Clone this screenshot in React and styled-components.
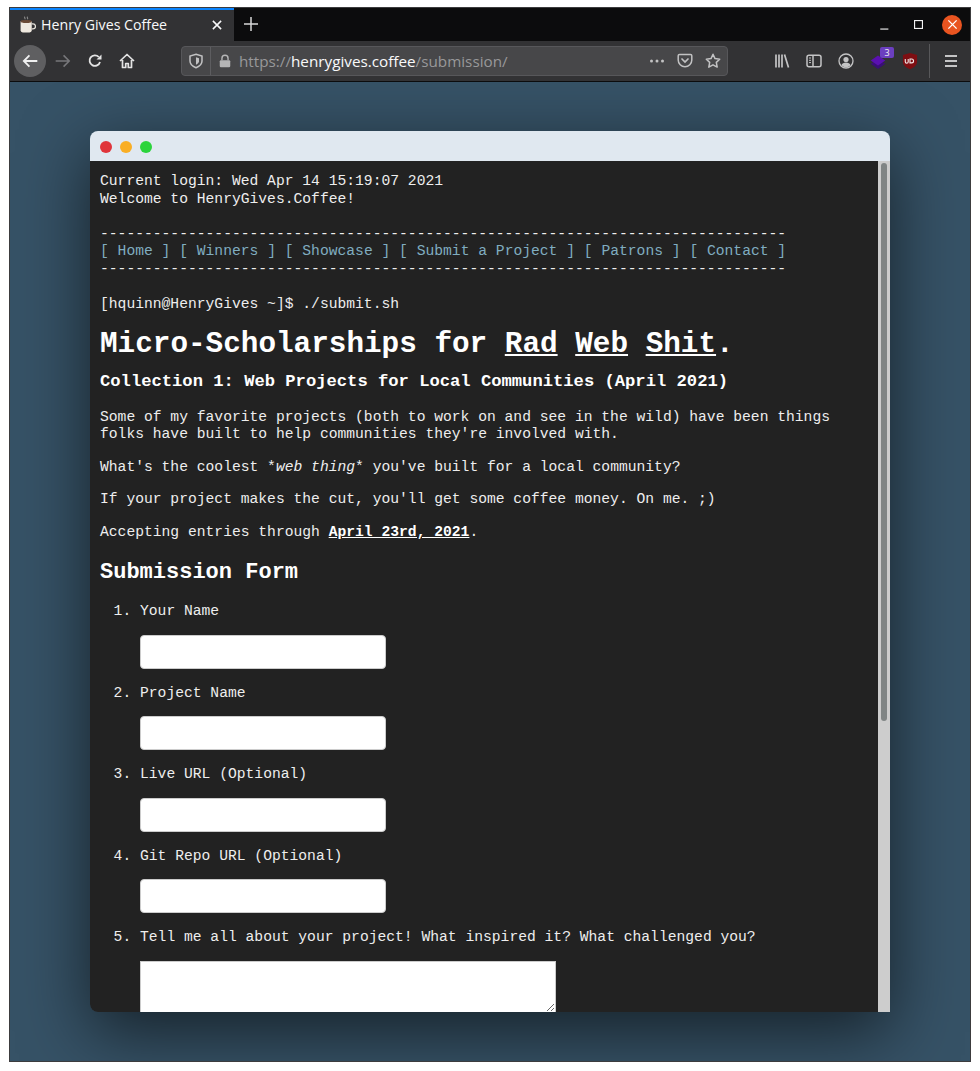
import React from "react";
import styled, { createGlobalStyle } from "styled-components";

const Global = createGlobalStyle`
  html, body {
    margin: 0;
    padding: 0;
    background: #fff;
  }
`;

const Screen = styled.div`
  width: 980px;
  height: 1071px;
  box-sizing: border-box;
  padding: 7px 9px 9px;
  overflow: hidden;
`;

const Frame = styled.div`
  height: 100%;
  box-sizing: border-box;
  border: 1px solid #3c3c3e;
  display: flex;
  flex-direction: column;
`;

const TabBar = styled.div`
  height: 33px;
  flex: none;
  background: #0c0c0d;
  display: flex;
  align-items: stretch;
`;

const Tab = styled.div`
  width: 224px;
  box-sizing: border-box;
  background: #323234;
  border-top: 2px solid #0a84ff;
  display: flex;
  align-items: center;
  padding: 0 11px 2px 9px;
  color: #f9f9fa;
  font: 14.2px "Open Sans", sans-serif;
`;

const TabTitle = styled.span`
  flex: 1;
  margin-left: 5px;
  white-space: nowrap;
`;

const NewTab = styled.div`
  width: 34px;
  padding-bottom: 2px;
  display: flex;
  align-items: center;
  justify-content: center;
`;

const WindowControls = styled.div`
  margin-left: auto;
  display: flex;
  align-items: center;
  padding-right: 8px;
  gap: 14px;
`;

const Control = styled.div`
  width: 20px;
  height: 20px;
  display: flex;
  align-items: center;
  justify-content: center;
`;

const CloseControl = styled(Control)`
  border-radius: 50%;
  background: #e95420;
`;

const Toolbar = styled.div`
  height: 40px;
  flex: none;
  box-sizing: border-box;
  background: #323234;
  display: flex;
  align-items: center;
  padding-left: 4px;
`;

const ToolButton = styled.div`
  width: 32px;
  height: 32px;
  flex: none;
  display: flex;
  align-items: center;
  justify-content: center;
  position: relative;
  border-radius: 50%;
  background: ${(p) => (p.$active ? "#5f5f61" : "transparent")};
  margin-right: ${(p) => (p.$active ? "1px" : "0")};
`;

const UrlBar = styled.div`
  width: 547px;
  height: 30px;
  box-sizing: border-box;
  margin-left: 38px;
  margin-right: 38px;
  background: #474749;
  border: 1px solid #57575a;
  border-radius: 4px;
  display: flex;
  align-items: center;
  padding: 0 0 0 6px;
  font: 15.25px "Open Sans", sans-serif;
  color: #98989a;
`;

const UrlDivider = styled.div`
  width: 1px;
  height: 28px;
  background: #5d5d60;
  margin: 0 7px 0 6px;
`;

const UrlText = styled.div`
  flex: 1;
  margin-left: 7px;
  white-space: nowrap;
`;

const Host = styled.span`
  color: #f9f9fa;
`;

const UrlAction = styled.div`
  width: 28px;
  display: flex;
  justify-content: center;
`;

const Badge = styled.span`
  position: absolute;
  top: 2px;
  right: 0;
  width: 14px;
  height: 11px;
  border-radius: 2px;
  background: #6b3fc0;
  color: #f2f2f2;
  font: 9px/11px "Open Sans", sans-serif;
  text-align: center;
`;

const ToolbarRule = styled.div`
  width: 1px;
  height: 34px;
  background: #58585a;
  margin: 0 5px 0 3px;
`;

const Page = styled.div`
  flex: 1;
  min-height: 0;
  overflow: hidden;
  border-top: 1px solid #0c0c0d;
  background: #365266;
  padding: 49px 80px 0;
`;

const TerminalWindow = styled.div`
  height: 881px;
  display: flex;
  flex-direction: column;
  border-radius: 8px 8px 0 8px;
  overflow: hidden;
  box-shadow: 0 20px 68px rgba(0, 0, 0, 0.6);
`;

const TitleBar = styled.div`
  height: 30px;
  flex: none;
  box-sizing: border-box;
  background: #e0e8f0;
  display: flex;
  align-items: center;
  padding: 2px 0 0 10px;
  gap: 8px;
`;

const Dot = styled.span`
  width: 12px;
  height: 12px;
  border-radius: 50%;
  background: ${(p) => p.$color};
`;

const TerminalBody = styled.div`
  flex: 1;
  min-height: 0;
  display: flex;
`;

const Content = styled.div`
  flex: 1;
  min-width: 0;
  overflow: hidden;
  box-sizing: border-box;
  padding: 12px 10px 10px;
  background: #222;
  color: #eee;
  font: 14.67px/17.5px "Liberation Mono", monospace;
`;

const Scrollbar = styled.div`
  width: 12px;
  flex: none;
  box-sizing: border-box;
  padding: 2px 3px 0;
  background: #cdcdcd;
`;

const Thumb = styled.div`
  height: 558px;
  border-radius: 3px;
  background: #808585;
`;

const Pre = styled.pre`
  margin: 0;
  font: inherit;
`;

const NavLink = styled.a`
  color: #80adc0;
`;

const Heading = styled.h1`
  margin: 15px 0 0;
  font-size: 29.33px;
  line-height: 34px;
  color: #fff;
`;

const HeadingLink = styled.a`
  color: #fff;
  text-decoration: underline;
`;

const SubHeading = styled.h3`
  margin: 9.5px 0 0;
  font-size: 17.16px;
  line-height: 20px;
  color: #fff;
`;

const Paragraph = styled.p`
  margin: 15px 0 0;
`;

const LeadParagraph = styled(Paragraph)`
  margin-top: 17px;
`;

const Deadline = styled.a`
  color: #fff;
  font-weight: 700;
  text-decoration: underline;
`;

const FormHeading = styled.h2`
  margin: 18.5px 0 0;
  font-size: 22px;
  line-height: 26px;
  color: #fff;
`;

const Steps = styled.ol`
  margin: 16.75px 0 0;
  padding-left: 40px;
`;

const Step = styled.li`
  padding-top: 1px;
  margin-bottom: 15px;
`;

const Field = styled.input`
  display: block;
  width: 246px;
  height: 34px;
  box-sizing: border-box;
  margin-top: 14px;
  background: #fff;
  border: 1px solid #ccc;
  border-radius: 4px;
`;

const LongField = styled.textarea`
  display: block;
  width: 416px;
  height: 52px;
  box-sizing: border-box;
  margin-top: 14px;
  background: #fff;
  border: 1px solid #ccc;
  border-radius: 0;
`;

const Icon = ({ size = 16, children, ...rest }) => (
  <svg width={size} height={size} viewBox="0 0 16 16" fill="none" {...rest}>
    {children}
  </svg>
);

const stroke = "#c4c4c5";

const navItems = ["Home", "Winners", "Showcase", "Submit a Project", "Patrons", "Contact"];
const fields = ["Your Name", "Project Name", "Live URL (Optional)", "Git Repo URL (Optional)"];
const rule = "-".repeat(78);

export default function App() {
  return (
    <>
      <Global />
      <Screen>
        <Frame>
          <TabBar>
            <Tab>
              <Icon size={17}>
                <path d="M5.500 0.500c-1 1 .8 1.400 0 2.600M8 0.500c-1 1 .8 1.400 0 2.600" stroke="#8d8d8d" strokeWidth="1" />
                <path d="M12 7.500h1.200a1.600 1.600 0 0 1 0 4.600H12" stroke="#e8e4dc" strokeWidth="1.200" />
                <path d="M1.500 5h10.500v8.500a2 2 0 0 1-2 2H3.500a2 2 0 0 1-2-2z" fill="#efe9df" />
                <ellipse cx="6.750" cy="5.200" rx="5.250" ry="1.400" fill="#6a4a35" />
              </Icon>
              <TabTitle>Henry Gives Coffee</TabTitle>
              <Icon size={12}>
                <path d="M2.500 2.500l11 11M13.500 2.500l-11 11" stroke="#f9f9fa" strokeWidth="2" />
              </Icon>
            </Tab>
            <NewTab>
              <Icon>
                <path d="M8 1v14M1 8h14" stroke="#d8d8d8" strokeWidth="1.500" />
              </Icon>
            </NewTab>
            <WindowControls>
              <Control>
                <Icon size={10}>
                  <path d="M2 14.500h13" stroke="#f2f2f2" strokeWidth="1.800" />
                </Icon>
              </Control>
              <Control>
                <Icon size={9}>
                  <rect x="1" y="1" width="14" height="14" stroke="#f2f2f2" strokeWidth="2" />
                </Icon>
              </Control>
              <CloseControl>
                <Icon size={11}>
                  <path d="M2 2l12 12M14 2L2 14" stroke="#fff" strokeWidth="2" />
                </Icon>
              </CloseControl>
            </WindowControls>
          </TabBar>
          <Toolbar>
            <ToolButton $active>
              <Icon size={18}>
                <path d="M14.500 8h-12M7.500 3L2.500 8l5 5" stroke="#f0f0f0" strokeWidth="1.600" />
              </Icon>
            </ToolButton>
            <ToolButton>
              <Icon size={18}>
                <path d="M1.500 8h12M8.500 3l5 5-5 5" stroke="#77777a" strokeWidth="1.400" />
              </Icon>
            </ToolButton>
            <ToolButton>
              <Icon>
                <path d="M13 9a5.300 5.300 0 1 1-1.200-5" stroke="#e4e4e4" strokeWidth="1.800" />
                <path d="M14.500 1.500v5h-5z" fill="#e4e4e4" />
              </Icon>
            </ToolButton>
            <ToolButton>
              <Icon>
                <path d="M1 8l7-6.500L15 8M3.500 7v7.500h3.200v-4h2.600v4h3.200V7" stroke="#e4e4e4" strokeWidth="1.700" strokeLinejoin="round" />
              </Icon>
            </ToolButton>
            <UrlBar>
              <ToolIconShield />
              <UrlDivider />
              <Icon size={14}>
                <path d="M4.500 7V5a3.500 3.500 0 0 1 7 0v2" stroke="#b5b5b6" strokeWidth="1.600" />
                <rect x="2" y="7" width="12" height="8" rx="1.400" fill="#b5b5b6" />
              </Icon>
              <UrlText>
                https://<Host>henrygives.coffee</Host>/submission/
              </UrlText>
              <UrlAction>
                <Icon>
                  <circle cx="2.500" cy="8" r="1.500" fill="#c2c2c3" />
                  <circle cx="8" cy="8" r="1.500" fill="#c2c2c3" />
                  <circle cx="13.500" cy="8" r="1.500" fill="#c2c2c3" />
                </Icon>
              </UrlAction>
              <UrlAction>
                <Icon>
                  <path d="M2.500 1.500h11a1.300 1.300 0 0 1 1.300 1.300v4.200a6.800 6.800 0 0 1-13.600 0V2.800a1.300 1.300 0 0 1 1.300-1.300z" stroke="#c2c2c3" strokeWidth="1.500" />
                  <path d="M5 6l3 3 3-3" stroke="#c2c2c3" strokeWidth="1.700" strokeLinecap="round" />
                </Icon>
              </UrlAction>
              <UrlAction>
                <Icon>
                  <path d="M8 1.300l2 4.300 4.700.6-3.400 3.200.9 4.700L8 11.800l-4.200 2.300.9-4.700L1.300 6.200 6 5.600z" stroke="#c2c2c3" strokeWidth="1.500" strokeLinejoin="round" />
                </Icon>
              </UrlAction>
            </UrlBar>
            <ToolButton>
              <Icon>
                <path d="M2 1.500v13M5 1.500v13M8 1.500v13M10.500 1.500l4 13" stroke={stroke} strokeWidth="1.700" />
              </Icon>
            </ToolButton>
            <ToolButton>
              <Icon>
                <rect x="1" y="2.200" width="14" height="11.600" rx="2" stroke={stroke} strokeWidth="1.500" />
                <path d="M7 2.500v11" stroke={stroke} strokeWidth="1.500" />
                <path d="M3 5h2M3 7.300h2M3 9.600h2" stroke={stroke} strokeWidth="1" />
              </Icon>
            </ToolButton>
            <ToolButton>
              <Icon>
                <circle cx="8" cy="8" r="7" stroke={stroke} strokeWidth="1.300" />
                <circle cx="8" cy="6.500" r="2.600" fill={stroke} />
                <path d="M3.400 12.300c.6-2 2.600-2.900 4.600-2.900s4 .9 4.600 2.900A6 6 0 0 1 8 14.200a6 6 0 0 1-4.600-1.900z" fill={stroke} />
              </Icon>
            </ToolButton>
            <ToolButton>
              <Icon size={18}>
                <path d="M8 6.500l6.500 4L8 15l-6.500-4.500z" fill="#3a0f78" />
                <path d="M8 3l6.500 4.500L8 12 1.500 7.500z" fill="#5a10b0" />
              </Icon>
              <Badge>3</Badge>
            </ToolButton>
            <ToolButton>
              <Icon size={18}>
                <path d="M8 .8L14.300 2.600V8.500c0 3-2.500 5.400-6.300 6.900-3.800-1.500-6.300-3.900-6.300-6.900V2.600z" fill="#7e0e12" />
                <path d="M3.800 6.200v2.400a1.300 1.300 0 0 0 2.600 0V6.200M8 6.200v3.500h1.400a1.750 1.750 0 0 0 0-3.500z" stroke="#f3e8e8" strokeWidth="1" />
              </Icon>
            </ToolButton>
            <ToolbarRule />
            <ToolButton>
              <Icon>
                <path d="M2 3h12M2 8h12M2 13h12" stroke={stroke} strokeWidth="1.800" />
              </Icon>
            </ToolButton>
          </Toolbar>
          <Page>
            <TerminalWindow>
              <TitleBar>
                <Dot $color="#e0353b" />
                <Dot $color="#f9ae24" />
                <Dot $color="#2bd43c" />
              </TitleBar>
              <TerminalBody>
                <Content>
                  <Pre>{"Current login: Wed Apr 14 15:19:07 2021\nWelcome to HenryGives.Coffee!\n\n"}{rule}{"\n"}
                    {navItems.map((item, i) => (
                      <React.Fragment key={item}>
                        <NavLink>[ {item} ]</NavLink>
                        {i < navItems.length - 1 ? " " : ""}
                      </React.Fragment>
                    ))}
                    {"\n"}{rule}{"\n\n"}[hquinn@HenryGives ~]$ ./submit.sh
                  </Pre>
                  <Heading>
                    Micro-Scholarships for <HeadingLink>Rad</HeadingLink> <HeadingLink>Web</HeadingLink>{" "}
                    <HeadingLink>Shit</HeadingLink>.
                  </Heading>
                  <SubHeading>Collection 1: Web Projects for Local Communities (April 2021)</SubHeading>
                  <LeadParagraph>
                    Some of my favorite projects (both to work on and see in the wild) have been things folks have built
                    to help communities they're involved with.
                  </LeadParagraph>
                  <Paragraph>
                    What's the coolest *<em>web thing</em>* you've built for a local community?
                  </Paragraph>
                  <Paragraph>If your project makes the cut, you'll get some coffee money. On me. ;)</Paragraph>
                  <Paragraph>
                    Accepting entries through <Deadline>April 23rd, 2021</Deadline>.
                  </Paragraph>
                  <FormHeading>Submission Form</FormHeading>
                  <Steps>
                    {fields.map((label) => (
                      <Step key={label}>
                        {label}
                        <Field />
                      </Step>
                    ))}
                    <Step>
                      Tell me all about your project! What inspired it? What challenged you?
                      <LongField />
                    </Step>
                  </Steps>
                </Content>
                <Scrollbar>
                  <Thumb />
                </Scrollbar>
              </TerminalBody>
            </TerminalWindow>
          </Page>
        </Frame>
      </Screen>
    </>
  );
}

function ToolIconShield() {
  return (
    <Icon>
      <path d="M8 1.200l6 1.800v5c0 3-2.600 5.400-6 6.800-3.400-1.400-6-3.800-6-6.800V3z" stroke="#c2c2c3" strokeWidth="1.500" />
      <path d="M8 4.200l3 1v3c0 1.500-1.400 2.700-3 3.500z" fill="#c2c2c3" />
    </Icon>
  );
}
